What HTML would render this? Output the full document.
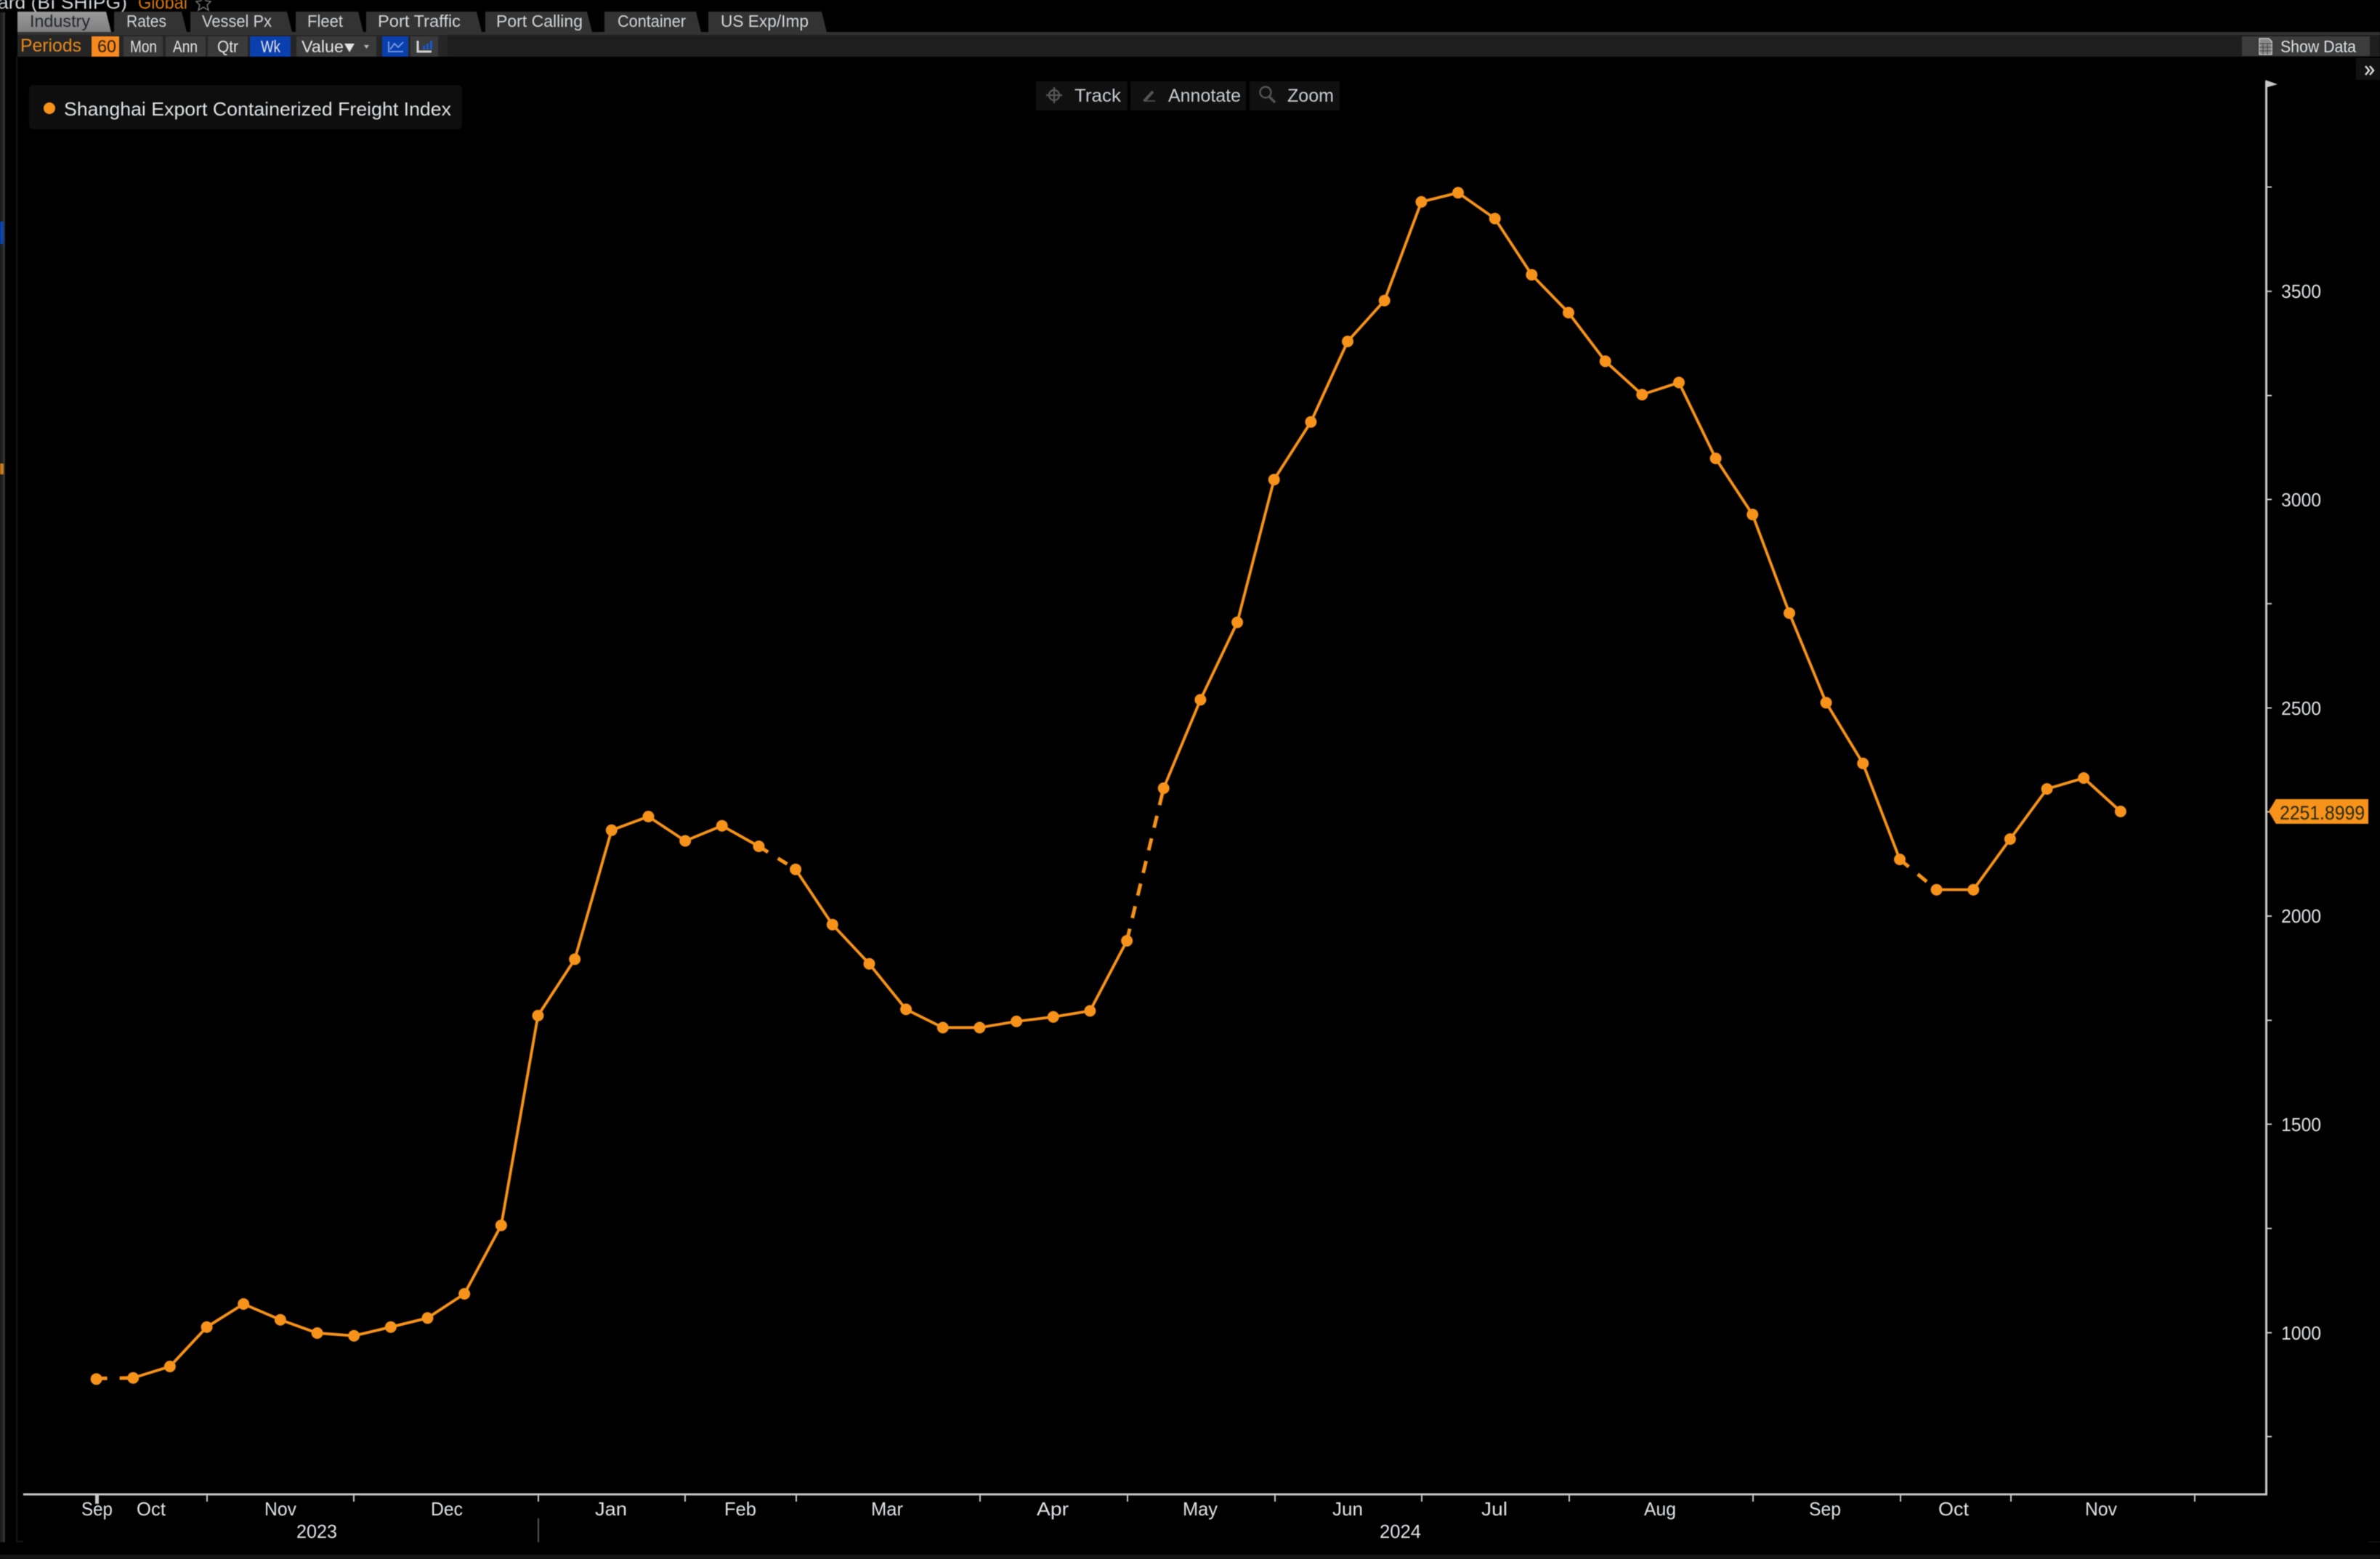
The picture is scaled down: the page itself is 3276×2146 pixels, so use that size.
<!DOCTYPE html>
<html lang="en"><head><meta charset="utf-8"><title>Shanghai Export Containerized Freight Index</title>
<style>
html,body{margin:0;padding:0;background:#000;width:3276px;height:2146px;overflow:hidden}
svg{display:block;filter:blur(.55px)}
text{font-family:"Liberation Sans",sans-serif;font-size:23px;fill:#d2d6da}
.tab{fill:#333}
.btn{fill:#3a3a3a}
.ax{fill:#e2e5e8;font-size:26px}
</style></head><body>
<svg xmlns="http://www.w3.org/2000/svg" width="3276" height="2146" viewBox="0 0 3276 2146">
<rect width="3276" height="2146" fill="#000"/>

<!-- top title -->
<text x="-3" y="12" textLength="178" lengthAdjust="spacingAndGlyphs" style="font-size:25px" fill="#ddd">ard (BI SHIPG)</text>
<text x="190" y="12" textLength="68" lengthAdjust="spacingAndGlyphs" style="font-size:25px;fill:#d9770f">Global</text>
<polygon points="280,-6 283,1 290,2 285,7 287,14 280,10 273,14 275,7 270,2 277,1" fill="none" stroke="#777" stroke-width="1.5"/>

<!-- left rails -->
<rect x="0" y="17" width="4" height="2106" fill="#202020"/>
<rect x="4" y="17" width="3" height="2106" fill="#333"/>
<rect x="22" y="78" width="2" height="2045" fill="#171717"/>
<rect x="22" y="2121" width="10" height="2" fill="#171717"/>
<rect x="0" y="305" width="5" height="31" fill="#0b45b0"/>
<rect x="0" y="638" width="5" height="15" fill="#c9781a"/>

<!-- tabs -->
<defs><linearGradient id="g" x1="0" y1="0" x2="0" y2="1"><stop offset="0" stop-color="#9a9a9a"/><stop offset="1" stop-color="#7f7f7f"/></linearGradient></defs>
<polygon points="24,16 146,16 153,44 24,44" fill="url(#g)"/>
<polygon class="tab" points="157,16 250,16 257,44 157,44"/>
<polygon class="tab" points="262,16 395,16 402,44 262,44"/>
<polygon class="tab" points="407,16 493,16 500,44 407,44"/>
<polygon class="tab" points="504,16 656,16 663,44 504,44"/>
<polygon class="tab" points="668,16 808,16 815,44 668,44"/>
<polygon class="tab" points="832,16 958,16 965,44 832,44"/>
<polygon class="tab" points="975,16 1131,16 1138,44 975,44"/>
<text x="41" y="37" textLength="83" lengthAdjust="spacingAndGlyphs" style="fill:#23262e">Industry</text>
<text x="174" y="37" textLength="55" lengthAdjust="spacingAndGlyphs">Rates</text>
<text x="278" y="37" textLength="96" lengthAdjust="spacingAndGlyphs">Vessel Px</text>
<text x="423" y="37" textLength="49" lengthAdjust="spacingAndGlyphs">Fleet</text>
<text x="520" y="37" textLength="114" lengthAdjust="spacingAndGlyphs">Port Traffic</text>
<text x="683" y="37" textLength="119" lengthAdjust="spacingAndGlyphs">Port Calling</text>
<text x="850" y="37" textLength="94" lengthAdjust="spacingAndGlyphs">Container</text>
<text x="992" y="37" textLength="121" lengthAdjust="spacingAndGlyphs">US Exp/Imp</text>

<!-- toolbar -->
<rect x="24" y="44" width="3252" height="4" fill="#333"/>
<rect x="24" y="48" width="3252" height="30" fill="#1e1e1e"/>
<rect x="24" y="48" width="592" height="30" fill="#252525"/>
<text x="28" y="71" textLength="84" lengthAdjust="spacingAndGlyphs" style="font-size:25px;fill:#e88a1e">Periods</text>
<rect x="126" y="50" width="38" height="28" fill="#f6891f"/>
<text x="134" y="72" textLength="26" lengthAdjust="spacingAndGlyphs" style="font-size:24px;fill:#2a1d0c">60</text>
<rect class="btn" x="170" y="50" width="54" height="28"/>
<rect class="btn" x="228" y="50" width="55" height="28"/>
<rect class="btn" x="286" y="50" width="55" height="28"/>
<rect x="344" y="50" width="56" height="28" fill="#0a3fae"/>
<rect class="btn" x="408" y="50" width="110" height="28"/>
<rect x="526" y="50" width="36" height="28" fill="#0a3fae"/>
<rect class="btn" x="565" y="50" width="38" height="28"/>
<text x="179" y="72" textLength="37" lengthAdjust="spacingAndGlyphs" style="fill:#e6e6e6">Mon</text>
<text x="238" y="72" textLength="34" lengthAdjust="spacingAndGlyphs" style="fill:#e6e6e6">Ann</text>
<text x="299" y="72" textLength="29" lengthAdjust="spacingAndGlyphs" style="fill:#e6e6e6">Qtr</text>
<text x="359" y="72" textLength="27" lengthAdjust="spacingAndGlyphs" style="fill:#e6e6e6">Wk</text>
<text x="415" y="72" textLength="58" lengthAdjust="spacingAndGlyphs" style="fill:#e6e6e6">Value</text>
<polygon points="474,60 488,60 481,72" fill="#e6e6e6"/>
<polygon points="501,62 508,62 504.5,67" fill="#bbb"/>
<path d="M535 57V71H555M537 68L543 60L548 65L555 58" fill="none" stroke="#7fa2e6" stroke-width="1.8"/>
<path d="M575 56V71H594" fill="none" stroke="#d5d5d5" stroke-width="3"/>
<rect x="582" y="63" width="3" height="5" fill="#1a58d8"/><rect x="587" y="60" width="3" height="8" fill="#1a58d8"/><rect x="592" y="56" width="3" height="12" fill="#1a58d8"/>

<!-- show data -->
<rect x="3086" y="50" width="176" height="27" fill="#3c3c3c"/>
<path d="M3110 53H3123L3127 57V75H3110Z" fill="#8a8a8a" stroke="#c8c8c8" stroke-width="1.5"/>
<path d="M3110 60H3127M3110 65H3127M3110 70H3127M3115 60V75M3121 60V75" stroke="#444" stroke-width="1"/>
<text x="3139" y="72" textLength="104" lengthAdjust="spacingAndGlyphs" style="fill:#dfe3e6">Show Data</text>
<rect x="3243" y="80" width="33" height="30" fill="#111"/>
<path d="M3256 91L3261 97L3256 103M3262 91L3267 97L3262 103" fill="none" stroke="#dfe3e6" stroke-width="2.4"/>

<!-- legend -->
<rect x="40" y="117" width="596" height="61" rx="6" fill="#0e0e0e"/>
<circle cx="68" cy="149" r="8" fill="#f7931a"/>
<text x="88" y="159" textLength="533" lengthAdjust="spacingAndGlyphs" style="font-size:26px;fill:#dfe3e6">Shanghai Export Containerized Freight Index</text>

<!-- track bar -->
<rect x="1426" y="112" width="126" height="40" fill="#101010"/>
<rect x="1556" y="112" width="159" height="40" fill="#101010"/>
<rect x="1720" y="112" width="124" height="40" fill="#101010"/>
<g fill="none" stroke="#555" stroke-width="2.4">
<circle cx="1451" cy="131" r="7"/><path d="M1451 120V142M1440 131H1462"/>
<path d="M1575 139L1587 126" stroke-width="4"/><path d="M1574 139H1590" stroke-width="1.6"/>
<circle cx="1742" cy="127" r="7.5"/><path d="M1747 133L1755 141" stroke-width="3.4"/>
</g>
<text x="1479" y="140" textLength="64" lengthAdjust="spacingAndGlyphs" style="font-size:25px;fill:#c9ced4">Track</text>
<text x="1608" y="140" textLength="100" lengthAdjust="spacingAndGlyphs" style="font-size:25px;fill:#c9ced4">Annotate</text>
<text x="1772" y="140" textLength="64" lengthAdjust="spacingAndGlyphs" style="font-size:25px;fill:#c9ced4">Zoom</text>

<!-- axes -->
<g fill="#c9c9c9">
<rect x="32" y="2055.5" width="3089" height="3"/>
<rect x="3118" y="112" width="3" height="1946"/>
<polygon points="3118,110 3135,116 3121,120"/>
<rect x="131" y="2056" width="5" height="14"/>
<g>
<rect x="284" y="2056" width="2" height="11"/><rect x="486" y="2056" width="2" height="11"/><rect x="740" y="2056" width="2" height="11"/><rect x="942" y="2056" width="2" height="11"/><rect x="1095" y="2056" width="2" height="11"/><rect x="1348" y="2056" width="2" height="11"/><rect x="1551" y="2056" width="2" height="11"/><rect x="1754" y="2056" width="2" height="11"/><rect x="1956" y="2056" width="2" height="11"/><rect x="2159" y="2056" width="2" height="11"/><rect x="2412" y="2056" width="2" height="11"/><rect x="2615" y="2056" width="2" height="11"/><rect x="2767" y="2056" width="2" height="11"/><rect x="3020" y="2056" width="2" height="11"/>
</g>
<rect x="3119" y="256.5" width="8" height="2"/><rect x="3119" y="400" width="8" height="2"/><rect x="3119" y="543.5" width="8" height="2"/><rect x="3119" y="686.5" width="8" height="2"/><rect x="3119" y="830" width="8" height="2"/><rect x="3119" y="973.5" width="8" height="2"/><rect x="3119" y="1116.5" width="8" height="2"/><rect x="3119" y="1260" width="8" height="2"/><rect x="3119" y="1403.5" width="8" height="2"/><rect x="3119" y="1546.5" width="8" height="2"/><rect x="3119" y="1690" width="8" height="2"/><rect x="3119" y="1833.5" width="8" height="2"/><rect x="3119" y="1976.5" width="8" height="2"/>
</g>
<rect x="740" y="2090" width="2" height="33" fill="#555"/>
<rect x="3260" y="2122" width="16" height="1" fill="#222"/>
<rect x="0" y="2140" width="3276" height="6" fill="#151515"/>

<!-- y labels -->
<g>
<text class="ax" x="3140" y="410" textLength="55" lengthAdjust="spacingAndGlyphs">3500</text>
<text class="ax" x="3140" y="697" textLength="55" lengthAdjust="spacingAndGlyphs">3000</text>
<text class="ax" x="3140" y="984" textLength="55" lengthAdjust="spacingAndGlyphs">2500</text>
<text class="ax" x="3140" y="1270" textLength="55" lengthAdjust="spacingAndGlyphs">2000</text>
<text class="ax" x="3140" y="1557" textLength="55" lengthAdjust="spacingAndGlyphs">1500</text>
<text class="ax" x="3140" y="1844" textLength="55" lengthAdjust="spacingAndGlyphs">1000</text>
</g>

<!-- x labels -->
<text class="ax" x="112" y="2086" textLength="43" lengthAdjust="spacingAndGlyphs">Sep</text>
<text class="ax" x="188" y="2086" textLength="40" lengthAdjust="spacingAndGlyphs">Oct</text>
<text class="ax" x="364" y="2086" textLength="44" lengthAdjust="spacingAndGlyphs">Nov</text>
<text class="ax" x="593" y="2086" textLength="44" lengthAdjust="spacingAndGlyphs">Dec</text>
<text class="ax" x="819" y="2086" textLength="44" lengthAdjust="spacingAndGlyphs">Jan</text>
<text class="ax" x="997" y="2086" textLength="44" lengthAdjust="spacingAndGlyphs">Feb</text>
<text class="ax" x="1199" y="2086" textLength="44" lengthAdjust="spacingAndGlyphs">Mar</text>
<text class="ax" x="1427" y="2086" textLength="44" lengthAdjust="spacingAndGlyphs">Apr</text>
<text class="ax" x="1628" y="2086" textLength="48" lengthAdjust="spacingAndGlyphs">May</text>
<text class="ax" x="1834" y="2086" textLength="42" lengthAdjust="spacingAndGlyphs">Jun</text>
<text class="ax" x="2039" y="2086" textLength="36" lengthAdjust="spacingAndGlyphs">Jul</text>
<text class="ax" x="2263" y="2086" textLength="44" lengthAdjust="spacingAndGlyphs">Aug</text>
<text class="ax" x="2490" y="2086" textLength="44" lengthAdjust="spacingAndGlyphs">Sep</text>
<text class="ax" x="2668" y="2086" textLength="42" lengthAdjust="spacingAndGlyphs">Oct</text>
<text class="ax" x="2870" y="2086" textLength="44" lengthAdjust="spacingAndGlyphs">Nov</text>
<text class="ax" x="408" y="2117" textLength="56" lengthAdjust="spacingAndGlyphs">2023</text>
<text class="ax" x="1899" y="2117" textLength="57" lengthAdjust="spacingAndGlyphs">2024</text>

<!-- series -->
<g fill="none" stroke="#f7931a" stroke-linejoin="round">
<polyline stroke-width="3.9" points="183.3,1896.7 233.9,1881 284.6,1826.7 335.2,1795 385.9,1816.7 436.6,1835 487.2,1838.7 537.9,1826.7 588.5,1814.3 639.2,1781 689.9,1686.7 740.5,1398 791.2,1320.4 841.8,1142.8 892.5,1124 943.2,1157.5 993.8,1136.7 1044.5,1165"/>
<polyline stroke-width="3.9" points="1095.1,1196.7 1145.8,1272.7 1196.5,1326.7 1247.1,1389.4 1297.8,1414.5 1348.4,1414.5 1399.1,1406 1449.8,1399.8 1500.4,1391.5 1551.1,1295"/>
<polyline stroke-width="3.9" points="1601.7,1085 1652.4,963.2 1703.1,856.6 1753.7,660.2 1804.4,580.8 1855,470 1905.7,413.7 1956.4,277.9 2007,265.3 2057.7,300.9 2108.3,378.2 2159,430.4 2209.7,497.3 2260.3,543.2 2311,526.5 2361.6,631 2412.3,708.3 2463,844 2513.6,967.3 2564.3,1050.9 2615,1183"/>
<polyline stroke-width="3.9" points="2665.6,1224.7 2716.3,1224.7 2766.9,1155 2817.6,1086 2868.2,1071 2918.9,1117"/>
<path stroke-width="5" stroke-dasharray="15 17" d="M132.6 1897.5L183.3 1896.7"/>
<path stroke-width="5" stroke-dasharray="15 16" d="M1044.5 1165L1095.1 1196.7"/>
<path stroke-width="5" stroke-dasharray="17 15" d="M1551.1 1295L1601.7 1085"/>
<path stroke-width="5" stroke-dasharray="16 16" d="M2615 1183L2665.6 1224.7"/>
</g>
<g fill="#f7931a">
<circle cx="132.6" cy="1898.3" r="8"/><circle cx="183.3" cy="1896.7" r="8"/><circle cx="233.9" cy="1881" r="8"/><circle cx="284.6" cy="1826.7" r="8"/><circle cx="335.2" cy="1795" r="8"/><circle cx="385.9" cy="1816.7" r="8"/><circle cx="436.6" cy="1835" r="8"/><circle cx="487.2" cy="1838.7" r="8"/><circle cx="537.9" cy="1826.7" r="8"/><circle cx="588.5" cy="1814.3" r="8"/><circle cx="639.2" cy="1781" r="8"/><circle cx="689.9" cy="1686.7" r="8"/><circle cx="740.5" cy="1398" r="8"/><circle cx="791.2" cy="1320.4" r="8"/><circle cx="841.8" cy="1142.8" r="8"/><circle cx="892.5" cy="1124" r="8"/><circle cx="943.2" cy="1157.5" r="8"/><circle cx="993.8" cy="1136.7" r="8"/><circle cx="1044.5" cy="1165" r="8"/><circle cx="1095.1" cy="1196.7" r="8"/><circle cx="1145.8" cy="1272.7" r="8"/><circle cx="1196.5" cy="1326.7" r="8"/><circle cx="1247.1" cy="1389.4" r="8"/><circle cx="1297.8" cy="1414.5" r="8"/><circle cx="1348.4" cy="1414.5" r="8"/><circle cx="1399.1" cy="1406" r="8"/><circle cx="1449.8" cy="1399.8" r="8"/><circle cx="1500.4" cy="1391.5" r="8"/><circle cx="1551.1" cy="1295" r="8"/><circle cx="1601.7" cy="1085" r="8"/><circle cx="1652.4" cy="963.2" r="8"/><circle cx="1703.1" cy="856.6" r="8"/><circle cx="1753.7" cy="660.2" r="8"/><circle cx="1804.4" cy="580.8" r="8"/><circle cx="1855" cy="470" r="8"/><circle cx="1905.7" cy="413.7" r="8"/><circle cx="1956.4" cy="277.9" r="8"/><circle cx="2007" cy="265.3" r="8"/><circle cx="2057.7" cy="300.9" r="8"/><circle cx="2108.3" cy="378.2" r="8"/><circle cx="2159" cy="430.4" r="8"/><circle cx="2209.7" cy="497.3" r="8"/><circle cx="2260.3" cy="543.2" r="8"/><circle cx="2311" cy="526.5" r="8"/><circle cx="2361.6" cy="631" r="8"/><circle cx="2412.3" cy="708.3" r="8"/><circle cx="2463" cy="844" r="8"/><circle cx="2513.6" cy="967.3" r="8"/><circle cx="2564.3" cy="1050.9" r="8"/><circle cx="2615" cy="1183" r="8"/><circle cx="2665.6" cy="1224.7" r="8"/><circle cx="2716.3" cy="1224.7" r="8"/><circle cx="2766.9" cy="1155" r="8"/><circle cx="2817.6" cy="1086" r="8"/><circle cx="2868.2" cy="1071" r="8"/><circle cx="2918.9" cy="1117" r="8"/>
</g>

<!-- price tag -->
<polygon points="3122.7,1116.7 3132.7,1100 3260,1100 3260,1134 3132.7,1134" fill="#f7931a"/>
<text x="3138" y="1128" textLength="117" lengthAdjust="spacingAndGlyphs" style="font-size:27px;fill:#2a2a14">2251.8999</text>
</svg>
</body></html>
